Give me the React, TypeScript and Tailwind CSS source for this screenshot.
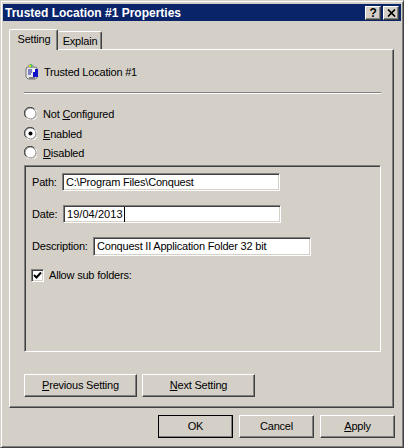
import React from 'react';

const raised = 'border border-t-white border-l-white border-r-[#404040] border-b-[#404040] shadow-[inset_-1px_-1px_0_#808080]';
const sunken = 'border border-t-[#808080] border-l-[#808080] border-r-white border-b-white shadow-[inset_1px_1px_0_#404040,inset_-1px_-1px_0_#d4d0c8]';

// First letter underlined, like a Windows mnemonic
const Mnemonic = ({ pre = '', hot, post }: { pre?: string; hot: string; post: string }) => (
  <span>{pre}<u>{hot}</u>{post}</span>
);

const Radio = ({ checked, children, className }: { checked?: boolean; children: React.ReactNode; className: string }) => (
  <div className={`flex h-[13px] items-center ${className}`}>
    <svg width="13" height="13" viewBox="0 0 13 13" className="shrink-0">
      <circle cx="6.5" cy="6.5" r="5.5" fill="#fff" stroke="#808080" />
      <path d="M2 10.2A5.6 5.6 0 0 1 10.2 2" fill="none" stroke="#404040" />
      <path d="M3 11.6A5.8 5.8 0 0 0 11.6 3" fill="none" stroke="#fff" />
      {checked && <circle cx="6.5" cy="6.5" r="2" fill="#000" />}
    </svg>
    <span className="ml-[6px] pt-px">{children}</span>
  </div>
);

const Field = ({ label, children, labelClass, inputClass, className }: { label: string; children: React.ReactNode; labelClass: string; inputClass: string; className: string }) => (
  <div className={`flex items-center ${className}`}>
    <span className={`shrink-0 ${labelClass}`}>{label}</span>
    <div className={`flex items-center bg-white pl-[3px] ${sunken} ${inputClass}`}>{children}</div>
  </div>
);

const Btn = ({ children, className }: { children: React.ReactNode; className: string }) => (
  <div className={`flex items-center justify-center ${raised} ${className}`}>{children}</div>
);

const TitleBtn = ({ children }: { children: React.ReactNode }) => (
  <div className={`flex h-[14px] w-[16px] items-center justify-center bg-[#d4d0c8] ${raised}`}>{children}</div>
);

const PolicyIcon = () => (
  <svg width="16" height="16" viewBox="0 0 16 16" className="shrink-0">
    <path d="M3 3h8l2 1v10l-2 1H4L2 13V5z" fill="#e8e8e8" stroke="#707070" />
    <path d="M4 1l3-1 3 2-2 2-4-1z" fill="#a0a0a0" />
    <path d="M5 1l2-1 2 2-2 2z" fill="#30c060" />
    <path d="M5 1h2v2H5z" fill="#e0e020" />
    <path d="M9 5h5v8H9z" fill="#1010c8" />
    <path d="M9 5h2v3H9z" fill="#fff" />
    <path d="M4 6h4M4 8h4M4 10h3" stroke="#1818a0" />
    <path d="M5 13h6v2H5z" fill="#808080" />
  </svg>
);

export default function App() {
  return (
    <div className="h-[448px] w-[404px] overflow-hidden bg-[#d4d0c8] font-['Liberation_Sans',sans-serif] text-[11px] leading-none tracking-[-0.2px] text-black">
      <div className="h-full border border-t-[#d4d0c8] border-l-[#d4d0c8] border-r-[#404040] border-b-[#404040] pl-[2px] pr-[2px] pt-[3px] shadow-[inset_1px_1px_0_#fff,inset_-1px_-1px_0_#808080]">
        {/* Title bar */}
        <div className="flex h-[17px] items-center justify-between bg-[#0a246a] pl-[2px] pr-[2px]">
          <span className="text-[12px] font-bold tracking-normal text-white">Trusted Location #1 Properties</span>
          <div className="flex gap-[2px]">
            <TitleBtn>
              <span className="text-[12px] font-bold">?</span>
            </TitleBtn>
            <TitleBtn>
              <svg width="9" height="8" viewBox="0 0 9 8">
                <path d="M1 0.5L8 7.5M8 0.5L1 7.5" stroke="#000" strokeWidth="1.7" />
              </svg>
            </TitleBtn>
          </div>
        </div>

        {/* Tabs */}
        <div className="relative z-10 ml-[6px] mt-[8px] flex h-[21px] items-start">
          <div className="flex h-[21px] w-[49px] items-center justify-center rounded-t-[2px] border-l border-r border-t border-l-white border-t-white border-r-[#404040] bg-[#d4d0c8] pb-[2px] pl-px shadow-[inset_-1px_0_0_#808080]">Setting</div>
          <div className="mt-[2px] flex h-[18px] w-[44px] items-center justify-center rounded-t-[2px] border-t border-r border-t-white border-r-[#404040] pt-px pl-px shadow-[inset_-1px_0_0_#808080]">Explain</div>
        </div>

        {/* Tab panel */}
        <div className="-mt-px ml-[6px] h-[359px] w-[385px] border border-t-white border-l-white border-r-[#404040] border-b-[#404040] pl-[14px] pr-[12px] pt-[14px] shadow-[inset_-1px_-1px_0_#808080]">
          <div className="flex h-[16px] items-center">
            <PolicyIcon />
            <span className="ml-[4px]">Trusted Location #1</span>
          </div>
          <div className="mt-[12px] h-[2px] border-t border-b border-t-[#808080] border-b-white" />

          <Radio className="mt-[13px]"><Mnemonic pre="Not " hot="C" post="onfigured" /></Radio>
          <Radio checked className="mt-[7px]"><Mnemonic hot="E" post="nabled" /></Radio>
          <Radio className="mt-[6px]"><Mnemonic hot="D" post="isabled" /></Radio>

          {/* Options group */}
          <div className="mt-[6px] h-[187px] w-[357px] border border-t-[#808080] border-l-[#808080] border-r-white border-b-white pl-[7px] pt-[7px] shadow-[inset_1px_1px_0_#404040]">
            <Field label="Path:" className="h-[18px]" labelClass="w-[30px]" inputClass="h-[18px] w-[218px]">C:\Program Files\Conquest</Field>
            <Field label="Date:" className="mt-[14px] h-[18px]" labelClass="w-[31px]" inputClass="h-[18px] w-[218px]">
              <span className="border-r border-black pr-px leading-[15px] tracking-[0.05px]">19/04/2013</span>
            </Field>
            <Field label="Description:" className="mt-[14px] h-[19px]" labelClass="w-[61px]" inputClass="h-[19px] w-[218px]">Conquest II Application Folder 32 bit</Field>
            <div className="mt-[13px] flex h-[13px] items-center">
              <div className={`-ml-px flex h-[13px] w-[13px] items-center justify-center bg-white ${sunken}`}>
                <svg width="9" height="9" viewBox="0 0 9 9">
                  <path d="M1 4l2.5 2.5L8 1.5" fill="none" stroke="#000" strokeWidth="2" />
                </svg>
              </div>
              <span className="ml-[5px]">Allow sub folders:</span>
            </div>
          </div>

          <div className="mt-[22px] flex gap-[5px]">
            <Btn className="h-[23px] w-[113px]"><Mnemonic hot="P" post="revious Setting" /></Btn>
            <Btn className="h-[23px] w-[113px]"><Mnemonic hot="N" post="ext Setting" /></Btn>
          </div>
        </div>

        {/* Dialog buttons */}
        <div className="mr-[6px] mt-[7px] flex justify-end gap-[6px]">
          <Btn className="h-[23px] w-[75px] outline outline-1 -outline-offset-1 outline-black">OK</Btn>
          <Btn className="h-[23px] w-[75px]">Cancel</Btn>
          <Btn className="h-[23px] w-[75px]"><Mnemonic hot="A" post="pply" /></Btn>
        </div>
      </div>
    </div>
  );
}
